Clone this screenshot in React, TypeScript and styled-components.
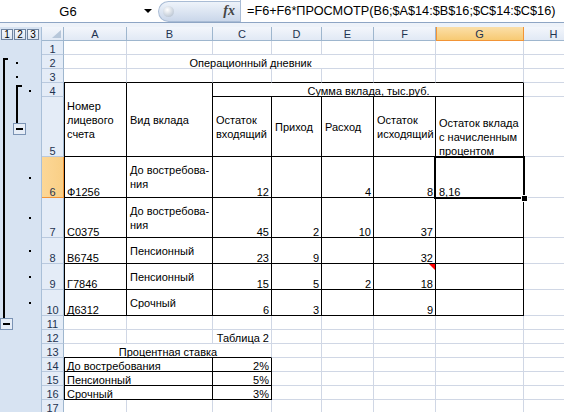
import React from "react";
import styled, { createGlobalStyle } from "styled-components";

const GlobalStyle = createGlobalStyle`
  html, body {
    margin: 0;
    padding: 0;
    background: #fff;
  }
  body {
    width: 564px;
    height: 412px;
    overflow: hidden;
    font-family: "Liberation Sans", Arial, sans-serif;
  }
`;

const LETTERS = ["A", "B", "C", "D", "E", "F", "G", "H"];
const COL_W = [63, 86, 59, 50, 52, 62, 88, 60];
const ROW_H = [14, 14, 14, 14, 60, 41, 40, 26, 26, 26, 14, 14, 14, 14, 14, 14, 14];
const ACTIVE_COL = 6;
const ACTIVE_ROW = 6;
const GRID = "#d0d7e5";

type Align = "left" | "right" | "center";
type VAlign = "top" | "center" | "bottom";
type CellDef = {
  text?: string;
  h?: Align;
  v?: VAlign;
  cs?: number;
  rs?: number;
  note?: boolean;
  selected?: boolean;
};

const cells: Record<string, CellDef> = {
  B2: { text: "Операционный дневник", h: "center", cs: 4 },
  A4: { text: "Номер\nлицевого\nсчета", v: "center", rs: 2 },
  B4: { text: "Вид вклада", v: "center", rs: 2 },
  C4: { text: "Сумма вклада, тыс.руб.", h: "center", cs: 5 },
  C5: { text: "Остаток\nвходящий", v: "center" },
  D5: { text: "Приход", v: "center" },
  E5: { text: "Расход", v: "center" },
  F5: { text: "Остаток\nисходящий", v: "center" },
  G5: { text: "Остаток вклада\nс начисленным\nпроцентом" },

  A6: { text: "Ф1256" },
  B6: { text: "До востребова-\nния", v: "center" },
  C6: { text: "12", h: "right" },
  E6: { text: "4", h: "right" },
  F6: { text: "8", h: "right" },
  G6: { text: "8,16", selected: true },

  A7: { text: "С0375" },
  B7: { text: "До востребова-\nния", v: "center" },
  C7: { text: "45", h: "right" },
  D7: { text: "2", h: "right" },
  E7: { text: "10", h: "right" },
  F7: { text: "37", h: "right" },

  A8: { text: "В6745" },
  B8: { text: "Пенсионный", v: "center" },
  C8: { text: "23", h: "right" },
  D8: { text: "9", h: "right" },
  F8: { text: "32", h: "right" },

  A9: { text: "Г7846" },
  B9: { text: "Пенсионный", v: "center" },
  C9: { text: "15", h: "right" },
  D9: { text: "5", h: "right" },
  E9: { text: "2", h: "right" },
  F9: { text: "18", h: "right", note: true },

  A10: { text: "Д6312" },
  B10: { text: "Срочный", v: "center" },
  C10: { text: "6", h: "right" },
  D10: { text: "3", h: "right" },
  F10: { text: "9", h: "right" },

  C12: { text: "Таблица 2", h: "right" },
  A13: { text: "Процентная ставка", h: "center", cs: 3 },
  A14: { text: "До востребования", cs: 2 },
  C14: { text: "2%", h: "right" },
  A15: { text: "Пенсионный", cs: 2 },
  C15: { text: "5%", h: "right" },
  A16: { text: "Срочный", cs: 2 },
  C16: { text: "3%", h: "right" },
};

// cells inside the two bordered tables
function inTable(r: number, c: number) {
  return (r >= 4 && r <= 10 && c >= 0 && c <= 6) || (r >= 14 && r <= 16 && c >= 0 && c <= 2);
}

export default function App() {
  const covered = new Set<string>();
  Object.entries(cells).forEach(([key, d]) => {
    const c = LETTERS.indexOf(key[0]);
    const r = parseInt(key.slice(1), 10);
    for (let i = 0; i < (d.rs || 1); i++)
      for (let j = 0; j < (d.cs || 1); j++)
        if (i || j) covered.add(LETTERS[c + j] + (r + i));
  });

  const body: React.ReactNode[] = [];
  for (let r = 1; r <= ROW_H.length; r++) {
    body.push(
      <RowHeader key={"rh" + r} $row={r + 1} $active={r === ACTIVE_ROW}>
        <HeaderNum>{r}</HeaderNum>
      </RowHeader>
    );
    for (let c = 0; c < LETTERS.length; c++) {
      const key = LETTERS[c] + r;
      if (covered.has(key)) continue;
      const d = cells[key] || {};
      const cs = d.cs || 1;
      const rs = d.rs || 1;
      const lastC = c + cs - 1;
      const lastR = r + rs - 1;
      let right = false;
      for (let i = r; i <= lastR; i++) if (inTable(i, lastC) || inTable(i, lastC + 1)) right = true;
      let bottom = false;
      for (let j = c; j <= lastC; j++) if (inTable(lastR, j) || inTable(lastR + 1, j)) bottom = true;
      const v = d.v || "bottom";
      body.push(
        <Cell
          key={key}
          $col={c + 3}
          $row={r + 1}
          $cs={cs}
          $rs={rs}
          $h={d.h || "left"}
          $v={v}
          $right={right ? "#000" : GRID}
          $bottom={bottom ? "#000" : GRID}
          $left={c === 0 && inTable(r, 0)}
        >
          {d.text && <CellText $v={v}>{d.text}</CellText>}
          {d.note && <NoteMark />}
          {d.selected && (
            <Selection>
              <FillHandle />
            </Selection>
          )}
        </Cell>
      );
    }
  }

  return (
    <>
      <GlobalStyle />
      <FormulaBar>
        <NameBox>
          <NameText>G6</NameText>
          <DropArrow />
        </NameBox>
        <FxPill>
          <PillKnob />
          <Fx>fx</Fx>
        </FxPill>
        <FormulaText>=F6+F6*ПРОСМОТР(B6;$A$14:$B$16;$C$14:$C$16)</FormulaText>
      </FormulaBar>
      <Band />
      <Sheet>
        <LevelButtons>
          <LevelButton>1</LevelButton>
          <LevelButton>2</LevelButton>
          <LevelButton>3</LevelButton>
        </LevelButtons>
        <Corner />
        {LETTERS.map((l, i) => (
          <ColHeader key={l} $col={i + 3} $active={i === ACTIVE_COL}>
            {l}
          </ColHeader>
        ))}
        <OutlinePane>
          <svg width="42" height="373" viewBox="0 0 42 373">
            <g fill="#000">
              {/* level 1 */}
              <rect x="3" y="17" width="2" height="260" />
              <rect x="3" y="17" width="5" height="2" />
              <rect x="16" y="21" width="2" height="2" />
              <rect x="16" y="35" width="2" height="2" />
              {/* level 2 */}
              <rect x="16" y="44" width="2" height="38" />
              <rect x="16" y="44" width="6" height="2" />
              {/* level 3 dots */}
              {[49, 136, 176, 209, 235, 261].map((y) => (
                <rect key={y} x="29" y={y} width="2" height="2" />
              ))}
            </g>
            <rect x="13.5" y="82.5" width="12" height="11" fill="#e6edf7" stroke="#7b93b4" />
            <rect x="16" y="87" width="7" height="2" fill="#000" />
            <rect x="0.5" y="277.5" width="12" height="11" fill="#e6edf7" stroke="#7b93b4" />
            <rect x="3" y="282" width="7" height="2" fill="#000" />
          </svg>
        </OutlinePane>
        {body}
      </Sheet>
    </>
  );
}

const FormulaBar = styled.div`
  display: flex;
  align-items: center;
  height: 22px;
  border-bottom: 1px solid #8ea5c4;
  background: #fff;
`;

const NameBox = styled.div`
  display: flex;
  align-items: center;
  width: 156px;
  height: 100%;
`;

const NameText = styled.div`
  width: 136px;
  text-align: center;
  font-size: 13px;
  color: #000;
`;

const DropArrow = styled.div`
  margin-left: 8px;
  width: 0;
  height: 0;
  border-left: 4px solid transparent;
  border-right: 4px solid transparent;
  border-top: 4px solid #000;
`;

const FxPill = styled.div`
  position: relative;
  display: flex;
  align-items: center;
  justify-content: flex-end;
  margin-left: 2px;
  width: 82px;
  height: 21px;
  box-sizing: border-box;
  border: 1px solid #a9bcd5;
  border-right: none;
  border-radius: 11px 0 0 11px;
  background: linear-gradient(#eef3fa, #cad7ea);
`;

const PillKnob = styled.div`
  position: absolute;
  left: 4px;
  top: 4px;
  width: 11px;
  height: 11px;
  border-radius: 50%;
  background: radial-gradient(circle at 40% 35%, #ffffff, #c2ccd8 70%, #a7b3c2);
`;

const Fx = styled.div`
  margin-right: 5px;
  font-family: "Liberation Serif", "Times New Roman", serif;
  font-style: italic;
  font-weight: bold;
  font-size: 14px;
  color: #444;
`;

const FormulaText = styled.div`
  flex: 1;
  height: 100%;
  display: flex;
  align-items: center;
  padding-left: 6px;
  border-left: 1px solid #a9bcd5;
  font-size: 12.7px;
  color: #000;
  white-space: nowrap;
`;

const Band = styled.div`
  height: 4px;
  background: #edf2f9;
`;

const Sheet = styled.div`
  display: grid;
  grid-template-columns: 42px 22px ${COL_W.map((w) => w + "px").join(" ")};
  grid-template-rows: 14px ${ROW_H.map((h) => h + "px").join(" ")};
  width: 564px;
  overflow: hidden;
  font-size: 11px;
`;

const LevelButtons = styled.div`
  grid-column: 1;
  grid-row: 1;
  display: flex;
  gap: 1px;
  padding: 2px 0 0 1px;
  background: #d7e3f2;
  border-right: 1px solid #a9bfd8;
`;

const LevelButton = styled.div`
  width: 10px;
  height: 9px;
  border: 1px solid #6f84a0;
  background: linear-gradient(#f4f7fb, #dde6f2);
  font-size: 10px;
  line-height: 10px;
  text-align: center;
  color: #000;
`;

const Corner = styled.div`
  grid-column: 2;
  grid-row: 1;
  position: relative;
  box-sizing: border-box;
  border-right: 1px solid #9eb6ce;
  border-bottom: 1px solid #9eb6ce;
  background: linear-gradient(#f3f6fb, #e1e9f5);
  &::after {
    content: "";
    position: absolute;
    right: 2px;
    bottom: 2px;
    width: 0;
    height: 0;
    border-left: 9px solid transparent;
    border-bottom: 8px solid #b7c7da;
  }
`;

const ColHeader = styled.div<{ $col: number; $active: boolean }>`
  grid-column: ${(p) => p.$col};
  grid-row: 1;
  box-sizing: border-box;
  display: flex;
  align-items: center;
  justify-content: center;
  font-size: 11px;
  color: #1e3350;
  border-right: 1px solid ${(p) => (p.$active ? "#f29436" : "#9eb6ce")};
  border-bottom: 1px solid ${(p) => (p.$active ? "#f29436" : "#9eb6ce")};
  box-shadow: ${(p) => (p.$active ? "inset 1px 0 0 #f29436" : "none")};
  background: ${(p) =>
    p.$active ? "linear-gradient(#fbdfa9, #f7ca73)" : "linear-gradient(#f3f6fb, #e1e9f5)"};
`;

const OutlinePane = styled.div`
  grid-column: 1;
  grid-row: 2 / span ${ROW_H.length};
  background: #d7e3f2;
  border-right: 1px solid #a9bfd8;
  overflow: hidden;
  svg {
    display: block;
  }
`;

const RowHeader = styled.div<{ $row: number; $active: boolean }>`
  grid-column: 2;
  grid-row: ${(p) => p.$row};
  box-sizing: border-box;
  display: flex;
  flex-direction: column;
  justify-content: flex-end;
  align-items: center;
  color: #1e3350;
  background: ${(p) => (p.$active ? "linear-gradient(90deg, #fcd796, #f9cf86)" : "#e4ecf7")};
  border-right: 1px solid ${(p) => (p.$active ? "#f29436" : "#9eb6ce")};
  border-bottom: 1px solid ${(p) => (p.$active ? "#f29436" : "#b9c9de")};
`;

const HeaderNum = styled.span`
  font-size: 11px;
  line-height: 14px;
  margin-bottom: -2px;
`;

const Cell = styled.div<{
  $col: number;
  $row: number;
  $cs: number;
  $rs: number;
  $h: Align;
  $v: VAlign;
  $right: string;
  $bottom: string;
  $left: boolean;
}>`
  grid-column: ${(p) => p.$col} / span ${(p) => p.$cs};
  grid-row: ${(p) => p.$row} / span ${(p) => p.$rs};
  position: relative;
  box-sizing: border-box;
  min-width: 0;
  display: flex;
  flex-direction: column;
  justify-content: ${(p) =>
    p.$v === "center" ? "center" : p.$v === "top" ? "flex-start" : "flex-end"};
  text-align: ${(p) => p.$h};
  padding: 0 2px 0 3px;
  border-right: 1px solid ${(p) => p.$right};
  border-bottom: 1px solid ${(p) => p.$bottom};
  box-shadow: ${(p) => (p.$left ? "inset 1px 0 0 #000" : "none")};
  background: #fff;
  color: #000;
  font-size: 11px;
  line-height: 14px;
  white-space: pre;
`;

const CellText = styled.span<{ $v: VAlign }>`
  display: block;
  margin-bottom: ${(p) => (p.$v === "bottom" ? "-2px" : "0")};
`;

const NoteMark = styled.div`
  position: absolute;
  top: 0;
  right: 0;
  width: 0;
  height: 0;
  border-top: 6px solid #ff0000;
  border-left: 6px solid transparent;
`;

const Selection = styled.div`
  position: absolute;
  inset: -1px -2px -2px -2px;
  border: 2px solid #000;
  pointer-events: none;
  z-index: 2;
`;

const FillHandle = styled.div`
  position: absolute;
  right: -5px;
  bottom: -5px;
  width: 5px;
  height: 5px;
  background: #000;
  border: 1px solid #fff;
`;
